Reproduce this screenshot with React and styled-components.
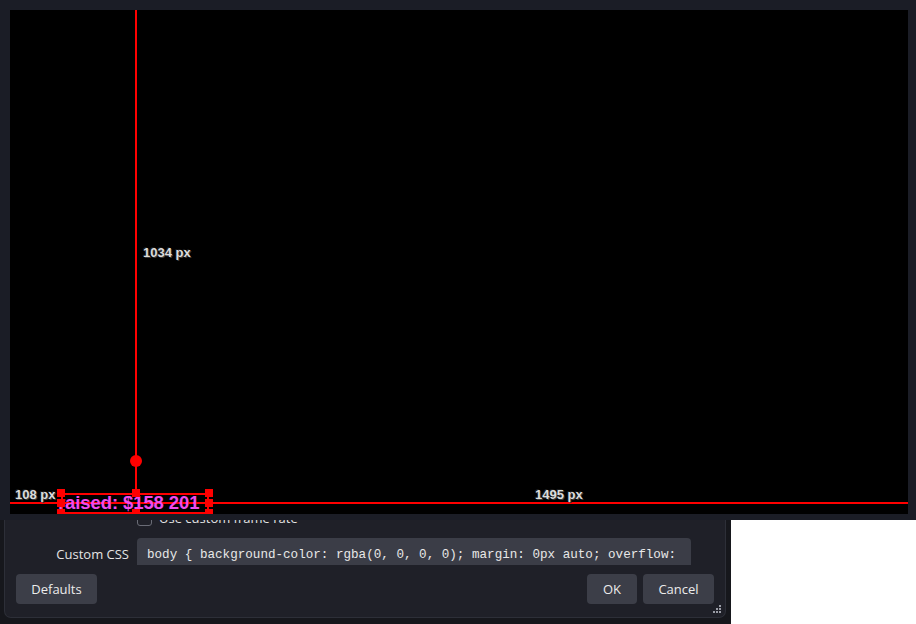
import styled, { createGlobalStyle } from 'styled-components'

const GlobalStyle = createGlobalStyle`
  html, body { margin: 0; padding: 0; background: #ffffff; }
  body { font-family: "Open Sans", "Noto Sans", sans-serif; }
`

const Page = styled.div`
  width: 916px;
  height: 624px;
  overflow: hidden;
  display: flex;
  flex-direction: column;
`

const PreviewWindow = styled.div`
  position: relative;
  z-index: 2;
  width: 916px;
  height: 520px;
  flex-shrink: 0;
  box-sizing: border-box;
  background: #1b1d26;
  padding: 10px 8px 6px 10px;
`

// the preview is a free canvas: guides, handles and labels sit at their scene coordinates
const Canvas = styled.div`
  position: relative;
  width: 100%;
  height: 100%;
  background: #000;
  overflow: hidden;
`

const GuideV = styled.div`
  position: absolute;
  left: ${p => p.x}px;
  top: 0;
  width: 2px;
  height: ${p => p.len}px;
  background: #ff0000;
`

const GuideH = styled.div`
  position: absolute;
  left: 0;
  right: 0;
  top: ${p => p.y}px;
  height: 2px;
  background: #ff0000;
`

const RotateKnob = styled.div`
  position: absolute;
  left: 120px;
  top: 445px;
  width: 12px;
  height: 12px;
  border-radius: 50%;
  background: #ff0000;
`

const SelBox = styled.div`
  position: absolute;
  left: 51px;
  top: 483px;
  width: 148px;
  height: 21px;
  box-sizing: border-box;
  border: 2px solid #ff0000;
`

const Handle = styled.div`
  position: absolute;
  left: ${p => p.x}px;
  top: ${p => p.y}px;
  width: 8px;
  height: 8px;
  margin: -4px 0 0 -4px;
  background: #ff0000;
`

const SourceText = styled.div`
  position: absolute;
  left: -5px;
  top: -3px;
  white-space: nowrap;
  font-family: "Liberation Sans", Arial, sans-serif;
  font-weight: bold;
  font-size: 18.5px;
  letter-spacing: -0.1px;
  color: #ee4cee;
`

const Measure = styled.div`
  position: absolute;
  left: ${p => p.x}px;
  top: ${p => p.y}px;
  font-family: "Liberation Sans", Arial, sans-serif;
  font-weight: bold;
  font-size: 13px;
  color: #dcdcdc;
  white-space: nowrap;
  text-shadow: 1px 1px 0 #3a3a3a, -1px -1px 0 #1a1a1a;
`

const DialogFrame = styled.div`
  position: relative;
  z-index: 1;
  width: 731px;
  height: 124px;
  flex-shrink: 0;
  margin-top: -20px;
  box-sizing: border-box;
  padding: 0 5px 6px 4px;
  background: #16171c;
`

const Panel = styled.div`
  height: 100%;
  box-sizing: border-box;
  background: #1f2028;
  border: 1px solid #2d2f38;
  border-top: none;
  border-radius: 0 0 7px 7px;
  display: flex;
  flex-direction: column;
  position: relative;
  padding: 8px 11px 0 11px;
`

const CheckRow = styled.div`
  display: flex;
  align-items: center;
  height: 20px;
  padding-left: 121px;
  gap: 7px;
`

const FieldRow = styled.div`
  display: flex;
  align-items: flex-start;
  height: 27px;
  margin-top: 10px;
`

const Label = styled.div`
  width: 120px;
  text-align: right;
  padding: 7px 7px 0 0;
  font-size: 13px;
  color: #e4e4e4;
  box-sizing: border-box;
`

const CheckBox = styled.div`
  width: 13px;
  height: 13px;
  border: 1px solid #6a6c76;
  border-radius: 3px;
`

const CheckText = styled.span`
  font-size: 13px;
  color: #e4e4e4;
`

const CodeBox = styled.div`
  width: 554px;
  height: 27px;
  box-sizing: border-box;
  background: #3b3d47;
  border-radius: 4px 4px 0 0;
  padding: 10px 0 0 10px;
  font-family: "Liberation Mono", "Courier New", monospace;
  font-size: 12.6px;
  color: #e8e8e8;
  white-space: nowrap;
  overflow: hidden;
  margin-left: 1px;
`

const ButtonBar = styled.div`
  display: flex;
  align-items: center;
  margin-top: 9px;
  gap: 6px;
`

const Spacer = styled.div`
  flex: 1;
`

const Button = styled.button`
  height: 30px;
  min-width: ${p => p.w}px;
  padding: 0 14px;
  border: none;
  border-radius: 4px;
  background: #3c3e48;
  color: #ececec;
  font-family: "Open Sans", "Noto Sans", sans-serif;
  font-size: 13px;
`

const Grip = styled.svg`
  position: absolute;
  right: 3px;
  bottom: 3px;
`

export default function App() {
  return (
    <Page>
      <GlobalStyle />
      <PreviewWindow>
        <Canvas>
          <GuideV x={125} len={483} />
          <GuideH y={492} />
          <RotateKnob />
          <Measure x={133} y={235}>1034 px</Measure>
          <Measure x={5} y={477}>108 px</Measure>
          <Measure x={525} y={477}>1495 px</Measure>
          <SelBox>
            <SourceText>raised: $158 201</SourceText>
          </SelBox>
          <Handle x={51} y={483} />
          <Handle x={126} y={483} />
          <Handle x={199} y={483} />
          <Handle x={51} y={493} />
          <Handle x={199} y={493} />
          <Handle x={51} y={503} />
          <Handle x={126} y={503} />
          <Handle x={199} y={503} />
        </Canvas>
      </PreviewWindow>
      <DialogFrame>
        <Panel>
          <CheckRow>
            <CheckBox />
            <CheckText>Use custom frame rate</CheckText>
          </CheckRow>
          <FieldRow>
            <Label>Custom CSS</Label>
            <CodeBox>body {'{'} background-color: rgba(0, 0, 0, 0); margin: 0px auto; overflow:</CodeBox>
          </FieldRow>
          <ButtonBar>
            <Button w={81}>Defaults</Button>
            <Spacer />
            <Button w={50}>OK</Button>
            <Button w={71}>Cancel</Button>
          </ButtonBar>
          <Grip width="9" height="9" viewBox="0 0 9 9">
            <rect x="6" y="0" width="2" height="2" fill="#9a9ca6" />
            <rect x="3" y="3" width="2" height="2" fill="#9a9ca6" />
            <rect x="6" y="3" width="2" height="2" fill="#9a9ca6" />
            <rect x="0" y="6" width="2" height="2" fill="#9a9ca6" />
            <rect x="3" y="6" width="2" height="2" fill="#9a9ca6" />
            <rect x="6" y="6" width="2" height="2" fill="#9a9ca6" />
          </Grip>
        </Panel>
      </DialogFrame>
    </Page>
  )
}
